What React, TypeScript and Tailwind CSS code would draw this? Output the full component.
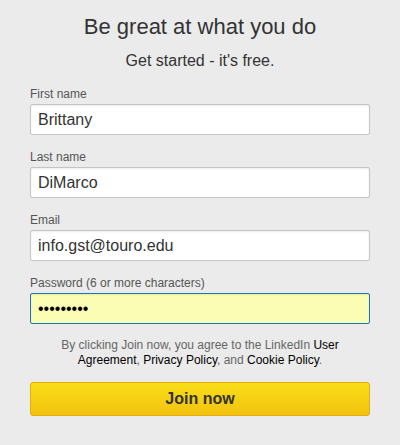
import { useState } from 'react';

function Field({
  label,
  value,
  type = 'text',
  focused = false,
}: {
  label: string;
  value: string;
  type?: string;
  focused?: boolean;
}) {
  const [val, setVal] = useState(value);
  return (
    <label className="block">
      <span className="block text-[12px] leading-[15px] text-[#555] mb-[2px]">{label}</span>
      <input
        type={type}
        value={val}
        onChange={(e) => setVal(e.target.value)}
        className={
          focused
            ? 'block w-full h-[31px] rounded-[2px] border border-[#1b74b8] bg-[#fbfdb5] px-[7px] text-[16px] text-black outline-none shadow-[inset_0_1px_2px_rgba(0,0,0,0.08)]'
            : 'block w-full h-[31px] rounded-[2px] border border-[#c4c4c4] bg-white px-[7px] text-[16px] text-[#333] outline-none shadow-[inset_0_1px_2px_rgba(0,0,0,0.08)]'
        }
      />
    </label>
  );
}

export default function App() {
  return (
    <div className="min-h-[445px] w-full bg-[#ebebeb] font-['Liberation_Sans',Arial,sans-serif]">
      <div className="px-[30px] pt-[12px]">
        {/* Heading */}
        <h1 className="text-center text-[22px] leading-[30px] text-[#333]">Be great at what you do</h1>
        <p className="mt-[9px] text-center text-[16px] leading-[20px] text-[#333]">Get started - it's free.</p>

        {/* Form */}
        <form className="mt-[16px]" onSubmit={(e) => e.preventDefault()}>
          <div className="flex flex-col gap-[15px]">
            <Field label="First name" value="Brittany" />
            <Field label="Last name" value="DiMarco" />
            <Field label="Email" value="info.gst@touro.edu" type="email" />
            <Field label="Password (6 or more characters)" value="123456789" type="password" focused />
          </div>

          <p className="mx-auto mt-[14px] w-[292px] text-center text-[12px] leading-[15px] text-[#666]">
            By clicking Join now, you agree to the LinkedIn <span className="text-black">User Agreement</span>,{' '}
            <span className="text-black">Privacy Policy</span>, and <span className="text-black">Cookie Policy</span>.
          </p>

          <button
            type="submit"
            className="mt-[14px] block h-[34px] w-full rounded-[3px] border border-[#e3aa0c] bg-gradient-to-b from-[#f8de18] to-[#f3c20f] text-[16px] font-bold text-[#333]"
          >
            Join now
          </button>
        </form>
      </div>
    </div>
  );
}
